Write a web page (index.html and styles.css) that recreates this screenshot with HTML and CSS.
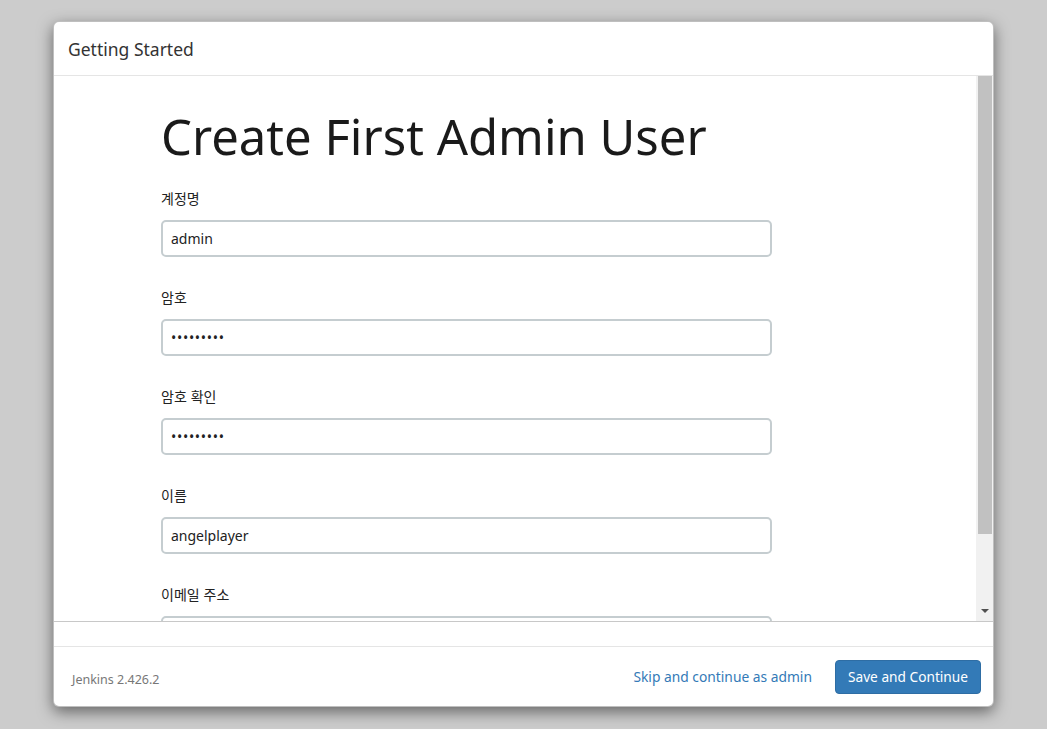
FILE: index.html
```html
<!DOCTYPE html>
<html lang="ko">
<head>
<meta charset="utf-8">
<title>Getting Started</title>
<link rel="stylesheet" href="styles.css">
</head>
<body>
<div class="dialog">
  <div class="header">Getting Started</div>
  <div class="frame">
    <div class="content">
      <h1 class="title">Create First Admin User</h1>
      <div class="field">
        <label class="label">계정명</label>
        <input class="input" type="text" value="admin">
      </div>
      <div class="field">
        <label class="label">암호</label>
        <input class="input password" type="password" value="123456789">
      </div>
      <div class="field">
        <label class="label">암호 확인</label>
        <input class="input password" type="password" value="123456789">
      </div>
      <div class="field">
        <label class="label">이름</label>
        <input class="input" type="text" value="angelplayer">
      </div>
      <div class="field">
        <label class="label">이메일 주소</label>
        <input class="input" type="text" value="">
      </div>
    </div>
    <div class="scrollbar">
      <div class="thumb"></div>
      <div class="track"></div>
      <div class="arrow"></div>
    </div>
  </div>
  <div class="spacer"></div>
  <div class="footer">
    <span class="version">Jenkins 2.426.2</span>
    <div class="actions">
      <a class="skip" href="#">Skip and continue as admin</a>
      <button class="save" type="button">Save and Continue</button>
    </div>
  </div>
</div>
</body>
</html>
```

FILE: styles.css
```css
html, body {
  margin: 0;
  padding: 0;
}
body {
  background: #cccccc;
  width: 1047px;
  height: 729px;
  overflow: hidden;
  font-family: "Noto Sans", "Noto Sans CJK KR", sans-serif;
  color: #222;
}
.dialog {
  margin: 21px 0 0 53px;
  width: 941px;
  height: 686px;
  box-sizing: border-box;
  background: #fff;
  border: 1px solid rgba(0,0,0,0.25);
  border-radius: 6px;
  box-shadow: 0 5px 15px rgba(0,0,0,0.5);
  display: flex;
  flex-direction: column;
  overflow: hidden;
}
.header {
  height: 54px;
  flex: none;
  box-sizing: border-box;
  border-bottom: 1px solid #e5e5e5;
  padding: 0 0 0 14px;
  display: flex;
  align-items: center;
  font-size: 17.5px;
  color: #333;
}
.frame {
  height: 546px;
  flex: none;
  box-sizing: border-box;
  border-bottom: 1px solid #c8c8c8;
  display: flex;
  overflow: hidden;
}
.content {
  flex: 1;
  padding: 0 0 0 107px;
  overflow: hidden;
}
.title {
  margin: 28px 0 0 0;
  font-weight: 400;
  font-size: 49px;
  line-height: 64px;
  color: #1a1a1a;
  white-space: nowrap;
}
.field {
  display: flex;
  flex-direction: column;
  margin-top: 30px;
}
.field:first-of-type {
  margin-top: 20px;
}
.label {
  font-family: "Noto Sans CJK KR", sans-serif;
  font-size: 14px;
  line-height: 20px;
  color: #222;
  margin-bottom: 12px;
}
.input {
  width: 611px;
  height: 37px;
  box-sizing: border-box;
  border: 2px solid #c5cdd0;
  border-radius: 5px;
  padding: 0 8px;
  font-family: "Noto Sans", sans-serif;
  font-size: 14px;
  color: #222;
  background: #fff;
  outline: none;
  margin: 0;
  flex: none;
}
.password {
  letter-spacing: 0.7px;
}
.scrollbar {
  width: 17px;
  flex: none;
  background: #f1f1f1;
  display: flex;
  flex-direction: column;
  align-items: center;
}
.thumb {
  width: 14px;
  height: 458px;
  background: #c1c1c1;
  flex: none;
}
.track {
  flex: 1;
}
.arrow {
  width: 0;
  height: 0;
  border-left: 4px solid transparent;
  border-right: 4px solid transparent;
  border-top: 4px solid #505050;
  margin-bottom: 8px;
}
.spacer {
  height: 25px;
  flex: none;
  box-sizing: border-box;
  border-bottom: 1px solid #e5e5e5;
}
.footer {
  flex: 1;
  display: flex;
  align-items: center;
  justify-content: space-between;
  padding: 0 12px 0 18px;
}
.version {
  font-size: 12.5px;
  color: #777;
  margin-top: 5px;
}
.actions {
  display: flex;
  align-items: center;
  gap: 23px;
}
.skip {
  font-size: 13.8px;
  color: #337ab7;
  text-decoration: none;
}
.save {
  height: 34px;
  padding: 0 12px;
  background: #337ab7;
  border: 1px solid #2e6da4;
  border-radius: 4px;
  color: #fff;
  font-family: "Noto Sans", sans-serif;
  font-size: 13.7px;
}
```
